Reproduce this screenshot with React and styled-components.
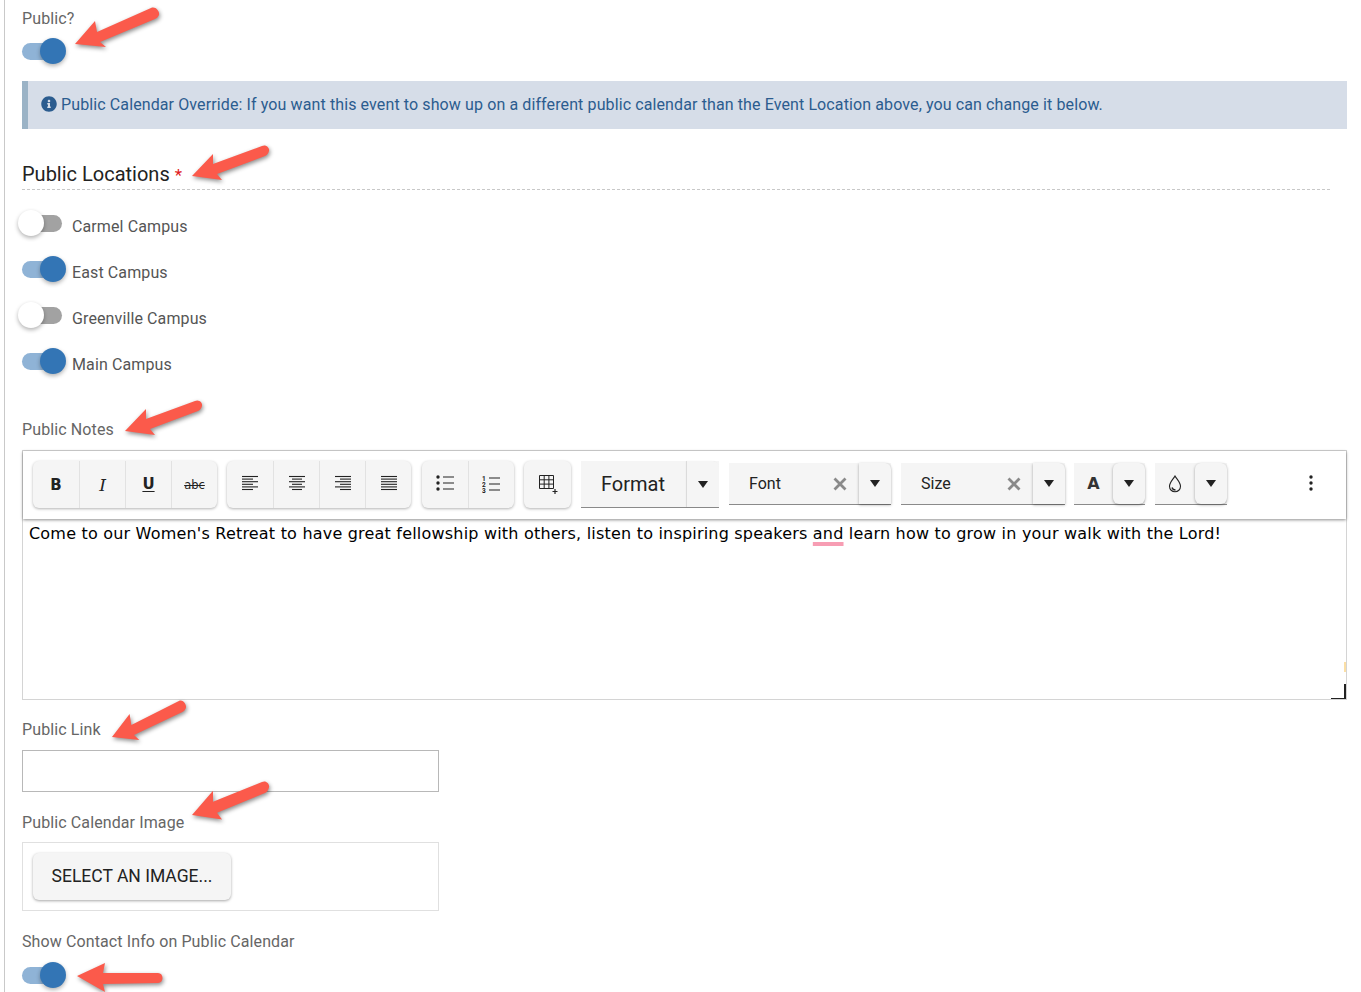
import styled, { createGlobalStyle } from 'styled-components';
import { FaInfoCircle } from 'react-icons/fa';

const GlobalStyle = createGlobalStyle`
  html, body {
    margin: 0;
    padding: 0;
    background: #fff;
    overflow: hidden;
  }
  * {
    box-sizing: border-box;
  }
`;

const Page = styled.div`
  position: relative;
  height: 992px;
  overflow: hidden;
  margin-left: 4px;
  padding: 8px 14px 0 17px;
  border-left: 1px solid #c9c9c9;
  font-family: 'Roboto', sans-serif;
  font-size: 16px;
  letter-spacing: 0.11px;
  color: #666;
`;

const Label = styled.div`
  height: 20px;
  line-height: 22px;
  margin-top: ${p => p.$top || 0}px;
  color: #666;
`;

const SwitchRow = styled.div`
  display: flex;
  align-items: flex-start;
  gap: 10px;
  height: 26px;
  margin-top: ${p => p.$top || 0}px;
`;

const Track = styled.span`
  position: relative;
  display: block;
  flex: none;
  width: 40px;
  height: 17px;
  margin-top: 5px;
  border-radius: 9px;
  background: ${p => (p.$on ? '#8fb3d6' : '#a2a2a2')};
`;

const Knob = styled.span`
  position: absolute;
  top: -5px;
  left: ${p => (p.$on ? '18px' : '-4px')};
  width: 26px;
  height: 26px;
  border-radius: 50%;
  background: ${p => (p.$on ? '#3375b5' : '#fff')};
  box-shadow: 0 2px 4px rgba(0, 0, 0, 0.3);
`;

const RowText = styled.span`
  line-height: 26px;
  margin-top: 4px;
  color: #555;
`;

const Alert = styled.div`
  display: flex;
  align-items: center;
  height: 48px;
  margin-top: 17px;
  padding: 0 0 2px 13px;
  border-left: 6px solid #9bb3c6;
  background: #d6dde8;
  color: #2b5c8f;
  svg {
    flex: none;
    width: 16px;
    height: 16px;
    margin-right: 4px;
  }
`;

const Heading = styled.div`
  height: 32px;
  margin: 29px 17px 0 0;
  line-height: 32px;
  font-size: 20px;
  letter-spacing: 0;
  color: #222;
  border-bottom: 1px dashed #c8c8c8;
  span {
    font-size: 17px;
    color: #e02020;
  }
`;

const Locations = styled.div`
  display: flex;
  flex-direction: column;
  gap: 20px;
  margin-top: 20px;
`;

const Editor = styled.div`
  position: relative;
  height: 250px;
  margin-top: 11px;
  border: 1px solid #d4d4d4;
`;

const Toolbar = styled.div`
  display: flex;
  align-items: flex-start;
  height: 68px;
  padding: 10px 12px 0 0;
  background: #fff;
  box-shadow: 0 1px 3px rgba(0, 0, 0, 0.45);
`;

const ToolGroup = styled.div`
  display: flex;
  flex: none;
  height: 47px;
  margin-left: ${p => p.$left}px;
  border-radius: 6px;
  background: #f5f5f5;
  box-shadow: 0 1px 3px rgba(0, 0, 0, 0.3);
`;

const ToolButton = styled.button`
  display: flex;
  align-items: center;
  justify-content: center;
  width: ${p => p.$width || 46}px;
  height: 100%;
  padding: 0 0 ${p => p.$lift || 0}px;
  border: 0;
  border-left: ${p => (p.$first ? '0' : '1px solid #e2e2e2')};
  background: transparent;
  color: #222;
  font-family: 'DejaVu Sans', sans-serif;
`;

const BoldGlyph = styled.span`
  font-size: 15px;
  font-weight: 700;
`;

const ItalicGlyph = styled.span`
  font-family: 'DejaVu Serif', serif;
  font-size: 17px;
  font-style: italic;
`;

const UnderGlyph = styled.span`
  font-size: 15px;
  font-weight: 700;
  text-decoration: underline;
  text-underline-offset: 2px;
`;

const StrikeGlyph = styled.span`
  font-size: 11.5px;
  text-decoration: line-through;
`;

const Select = styled.div`
  display: flex;
  flex: none;
  width: ${p => p.$width}px;
  height: ${p => p.$height || 42}px;
  margin-left: ${p => p.$left}px;
  margin-top: ${p => p.$top ?? 2}px;
  background: #f5f5f5;
  border-bottom: 1px solid #8a8a8a;
`;

const SelectText = styled.div`
  flex: 1;
  display: flex;
  align-items: center;
  justify-content: space-between;
  padding: 0 12px 0 20px;
  font-size: ${p => p.$size || 16}px;
  letter-spacing: 0;
  color: #222;
`;

const Arrow = styled.div`
  display: flex;
  align-items: center;
  justify-content: center;
  flex: none;
  width: 32px;
  height: 100%;
  background: #f5f5f5;
  border-radius: ${p => (p.$round ? '6px' : '0 6px 0 0')};
  box-shadow: ${p => (p.$flat ? '-1px 0 1px rgba(0, 0, 0, 0.12)' : '0 1px 3px rgba(0, 0, 0, 0.35)')};
`;

const Caret = styled.span`
  width: 0;
  height: 0;
  border-left: 5.5px solid transparent;
  border-right: 5.5px solid transparent;
  border-top: 7px solid #222;
`;

const Swatch = styled.div`
  flex: 1;
  display: flex;
  align-items: center;
  justify-content: center;
  font-family: 'DejaVu Sans', sans-serif;
  font-size: 16px;
  font-weight: 700;
  color: #333;
`;

const MoreButton = styled.div`
  display: flex;
  align-items: center;
  justify-content: center;
  width: 46px;
  height: 44px;
  margin-left: auto;
`;

const EditorText = styled.div`
  padding-left: 6px;
  line-height: 30px;
  font-family: 'DejaVu Sans', sans-serif;
  font-size: 16px;
  letter-spacing: 0.2px;
  color: #000;
`;

const Misspelt = styled.span`
  text-decoration: underline #f79db3 3.5px;
  text-underline-offset: 3px;
`;

const ResizeCorner = styled.span`
  position: absolute;
  right: 0;
  bottom: 0;
  width: 15px;
  height: 15px;
  border-right: 2px solid #222;
  border-bottom: 1.5px solid #222;
`;

const ScrollMark = styled.span`
  position: absolute;
  right: 0;
  bottom: 27px;
  width: 2px;
  height: 10px;
  background: #fbdfa6;
`;

const TextInput = styled.input`
  display: block;
  width: 417px;
  height: 42px;
  margin-top: 11px;
  border: 1px solid #b8b8b8;
  background: #fff;
  outline: none;
`;

const ImageBox = styled.div`
  width: 417px;
  height: 69px;
  margin-top: 10px;
  padding: 10px;
  border: 1px solid #e0e0e0;
`;

const ImageButton = styled.button`
  width: 198px;
  height: 47px;
  padding: 0 0 2px;
  border: 0;
  border-radius: 6px;
  background: #f5f5f5;
  box-shadow: 0 1px 3px rgba(0, 0, 0, 0.35);
  font-family: 'Roboto', sans-serif;
  font-size: 17.5px;
  color: #222;
`;

const Annotations = styled.svg`
  position: absolute;
  top: 0;
  left: -5px;
  width: 1361px;
  height: 992px;
  pointer-events: none;
  filter: drop-shadow(1px 2px 2px rgba(0, 0, 0, 0.45));
`;

const steep = 'M0 0L20-23L22-12L76-36C81-38 85-32 84-29C83-27 82-26 80-25L25-2L31 3Z';
const shallow = 'M0 0L21-22L21-12L70-30C74-32 78-28 77-25C76-22 75-21 73-20L25-2L30 4Z';
const flat = 'M0 0L28-13L26-3L81-3C87-3 87 7 81 7L26 8L28 16Z';

const annotations = [
  { x: 75, y: 44, d: steep, scale: '1 1' },
  { x: 192, y: 176, d: shallow, scale: '1 1' },
  { x: 125, y: 431, d: shallow, scale: '1 1' },
  { x: 112, y: 737, d: steep, scale: '0.88 1' },
  { x: 192, y: 815, d: shallow, scale: '1 1.1' },
  { x: 77, y: 976, d: flat, scale: '1 1' },
];

const locations = [
  { name: 'Carmel Campus', on: false },
  { name: 'East Campus', on: true },
  { name: 'Greenville Campus', on: false },
  { name: 'Main Campus', on: true },
];

function Switch({ on }) {
  return (
    <Track $on={on}>
      <Knob $on={on} />
    </Track>
  );
}

function Lines({ rows }) {
  return (
    <svg width="18" height="16" viewBox="0 0 18 16" stroke="#222" strokeWidth="1.1">
      {rows.map((row, idx) => (
        <line key={idx} x1={row[0]} x2={row[1]} y1={1.5 + idx * 2.6} y2={1.5 + idx * 2.6} />
      ))}
    </svg>
  );
}

const alignLeft = [[1, 17], [1, 12], [1, 17], [1, 12], [1, 17], [1, 12]];
const alignCenter = [[1, 17], [4, 14], [1, 17], [4, 14], [1, 17], [4, 14]];
const alignRight = [[1, 17], [6, 17], [1, 17], [6, 17], [1, 17], [6, 17]];
const alignFull = [[1, 17], [1, 17], [1, 17], [1, 17], [1, 17], [1, 17]];

function BulletIcon() {
  return (
    <svg width="19" height="16" viewBox="0 0 19 16" fill="#222" stroke="#222">
      <circle cx="2" cy="2" r="1.7" stroke="none" />
      <circle cx="2" cy="8" r="1.7" stroke="none" />
      <circle cx="2" cy="14" r="1.7" stroke="none" />
      <path d="M7 2H18M7 8H18M7 14H18" fill="none" strokeWidth="1.2" />
    </svg>
  );
}

function NumberIcon() {
  return (
    <svg width="19" height="24" viewBox="0 0 19 24" fill="#222" stroke="#222">
      <text x="0" y="8.500" fontSize="6.500" fontWeight="700" fontFamily="Roboto, sans-serif" stroke="none">1</text>
      <text x="0" y="14.500" fontSize="6.500" fontWeight="700" fontFamily="Roboto, sans-serif" stroke="none">2</text>
      <text x="0" y="20.500" fontSize="6.500" fontWeight="700" fontFamily="Roboto, sans-serif" stroke="none">3</text>
      <path d="M7 6H18M7 12H18M7 18H18" fill="none" strokeWidth="1.2" />
    </svg>
  );
}

function TableIcon() {
  return (
    <svg width="20" height="20" viewBox="0 0 20 20" fill="none" stroke="#222" strokeWidth="1">
      <path d="M1.500 1.500H15.500V14.500H1.500ZM1.500 5.800H15.500M1.500 10.100H15.500M6.200 1.500V14.500M10.900 1.500V14.500" />
      <path d="M14.500 17.500H19.500M17 15V20" strokeWidth="1.2" />
    </svg>
  );
}

function CloseIcon() {
  return (
    <svg width="14" height="14" viewBox="0 0 14 14" stroke="#8a8a8a" strokeWidth="2.8">
      <path d="M1.500 1.500L12.500 12.500M12.500 1.500L1.500 12.500" />
    </svg>
  );
}

function DropIcon() {
  return (
    <svg width="14" height="18" viewBox="0 0 14 18" fill="none" stroke="#222" strokeWidth="1.1">
      <path d="M7 1C5 4.500 1.500 7.500 1.500 11.300C1.500 14.500 4 16.800 7 16.800C10 16.800 12.500 14.500 12.500 11.300C12.500 7.500 9 4.500 7 1Z" />
      <path d="M4 12.500C4.500 14 5.800 15 7.500 15" strokeWidth="1.4" />
    </svg>
  );
}

function MoreIcon() {
  return (
    <svg width="4" height="16" viewBox="0 0 4 16" fill="#222">
      <circle cx="2" cy="2" r="1.7" />
      <circle cx="2" cy="8" r="1.7" />
      <circle cx="2" cy="14" r="1.7" />
    </svg>
  );
}

function App() {
  return (
    <Page>
      <GlobalStyle />
      <Label>Public?</Label>
      <SwitchRow $top={10}>
        <Switch on />
      </SwitchRow>

      <Alert>
        <FaInfoCircle />
        Public Calendar Override: If you want this event to show up on a different public calendar than the Event Location above, you can change it below.
      </Alert>

      <Heading>Public Locations <span>*</span></Heading>
      <Locations>
        {locations.map(location => (
          <SwitchRow key={location.name}>
            <Switch on={location.on} />
            <RowText>{location.name}</RowText>
          </SwitchRow>
        ))}
      </Locations>

      <Label $top={45}>Public Notes</Label>
      <Editor>
        <Toolbar>
          <ToolGroup $left={10}>
            <ToolButton $first><BoldGlyph>B</BoldGlyph></ToolButton>
            <ToolButton><ItalicGlyph>I</ItalicGlyph></ToolButton>
            <ToolButton $lift={1}><UnderGlyph>U</UnderGlyph></ToolButton>
            <ToolButton><StrikeGlyph>abc</StrikeGlyph></ToolButton>
          </ToolGroup>
          <ToolGroup $left={10}>
            <ToolButton $first $lift={3}><Lines rows={alignLeft} /></ToolButton>
            <ToolButton $lift={3}><Lines rows={alignCenter} /></ToolButton>
            <ToolButton $lift={3}><Lines rows={alignRight} /></ToolButton>
            <ToolButton $lift={3}><Lines rows={alignFull} /></ToolButton>
          </ToolGroup>
          <ToolGroup $left={11}>
            <ToolButton $first $lift={3}><BulletIcon /></ToolButton>
            <ToolButton $lift={2}><NumberIcon /></ToolButton>
          </ToolGroup>
          <ToolGroup $left={10}>
            <ToolButton $first $width={47} $lift={1}><TableIcon /></ToolButton>
          </ToolGroup>
          <Select $left={10} $width={138} $height={47} $top={0}>
            <SelectText $size={20}>Format</SelectText>
            <Arrow $flat><Caret /></Arrow>
          </Select>
          <Select $left={10} $width={162}>
            <SelectText>Font <CloseIcon /></SelectText>
            <Arrow><Caret /></Arrow>
          </Select>
          <Select $left={10} $width={164}>
            <SelectText>Size <CloseIcon /></SelectText>
            <Arrow><Caret /></Arrow>
          </Select>
          <Select $left={9} $width={71}>
            <Swatch>A</Swatch>
            <Arrow $round><Caret /></Arrow>
          </Select>
          <Select $left={10} $width={72}>
            <Swatch><DropIcon /></Swatch>
            <Arrow $round><Caret /></Arrow>
          </Select>
          <MoreButton><MoreIcon /></MoreButton>
        </Toolbar>
        <EditorText>
          Come to our Women's Retreat to have great fellowship with others, listen to inspiring speakers <Misspelt>and</Misspelt> learn how to grow in your walk with the Lord!
        </EditorText>
        <ScrollMark />
        <ResizeCorner />
      </Editor>

      <Label $top={19}>Public Link</Label>
      <TextInput />

      <Label $top={20}>Public Calendar Image</Label>
      <ImageBox>
        <ImageButton>SELECT AN IMAGE...</ImageButton>
      </ImageBox>

      <Label $top={20}>Show Contact Info on Public Calendar</Label>
      <SwitchRow $top={11}>
        <Switch on />
      </SwitchRow>

      <Annotations viewBox="0 0 1361 992">
        {annotations.map(mark => (
          <path key={mark.y} d={mark.d} fill="#fb5a4b" transform={`translate(${mark.x} ${mark.y}) scale(${mark.scale})`} />
        ))}
      </Annotations>
    </Page>
  );
}

export default App;
